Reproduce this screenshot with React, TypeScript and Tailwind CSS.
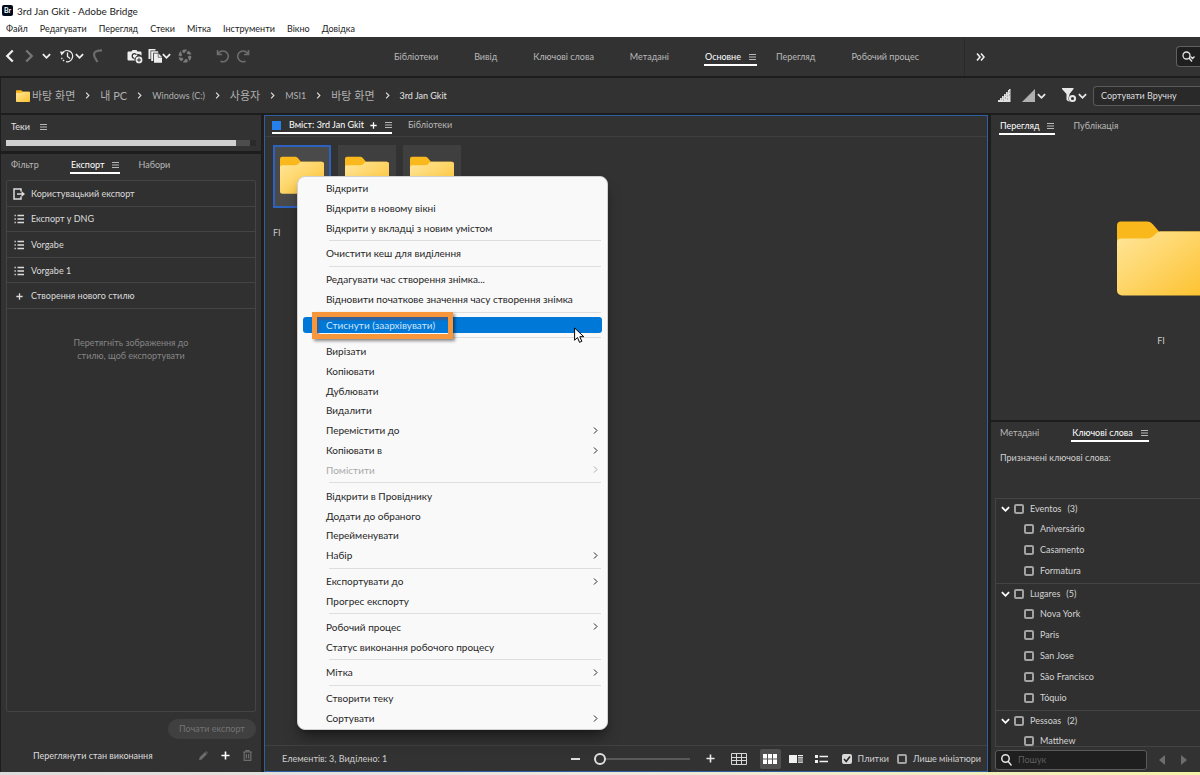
import type { ReactNode } from "react";
import { clsx } from "clsx";

interface MenuEntry {
  label: string;
  submenu?: boolean;
  disabled?: boolean;
  active?: boolean;
}

interface KeywordGroup {
  name: string;
  items: string[];
  count: number;
}

const appMenu = ["Файл", "Редагувати", "Перегляд", "Стеки", "Мітка", "Інструменти", "Вікно", "Довідка"];

const workspaces = ["Бібліотеки", "Вивід", "Ключові слова", "Метадані", "Основне", "Перегляд", "Робочий процес"];

const crumbs = ["바탕 화면", "내 PC", "Windows (C:)", "사용자", "MSI1", "바탕 화면", "3rd Jan Gkit"];

const presets = ["Експорт у DNG", "Vorgabe", "Vorgabe 1"];

const contextMenu: MenuEntry[][] = [
  [{ label: "Відкрити" }, { label: "Відкрити в новому вікні" }, { label: "Відкрити у вкладці з новим умістом" }],
  [{ label: "Очистити кеш для виділення" }],
  [{ label: "Редагувати час створення знімка..." }, { label: "Відновити початкове значення часу створення знімка" }],
  [{ label: "Стиснути (заархівувати)", active: true }],
  [
    { label: "Вирізати" },
    { label: "Копіювати" },
    { label: "Дублювати" },
    { label: "Видалити" },
    { label: "Перемістити до", submenu: true },
    { label: "Копіювати в", submenu: true },
    { label: "Помістити", submenu: true, disabled: true },
  ],
  [
    { label: "Відкрити в Провіднику" },
    { label: "Додати до обраного" },
    { label: "Перейменувати" },
    { label: "Набір", submenu: true },
  ],
  [{ label: "Експортувати до", submenu: true }, { label: "Прогрес експорту" }],
  [{ label: "Робочий процес", submenu: true }, { label: "Статус виконання робочого процесу" }],
  [{ label: "Мітка", submenu: true }],
  [{ label: "Створити теку" }, { label: "Сортувати", submenu: true }],
];

const keywords: KeywordGroup[] = [
  { name: "Eventos", count: 3, items: ["Aniversário", "Casamento", "Formatura"] },
  { name: "Lugares", count: 5, items: ["Nova York", "Paris", "San Jose", "São Francisco", "Tóquio"] },
  { name: "Pessoas", count: 2, items: ["Matthew"] },
];

const checkbox =
  "h-[10px] w-[10px] shrink-0 appearance-none rounded-[2px] border-2 border-[#a2a2a2] bg-transparent";

function Chevron({ dir, className }: { dir: "left" | "right" | "down"; className?: string }) {
  const d = { left: "M7 1 2 6l5 5", right: "M2 1l5 5-5 5", down: "M1 3.500l4 4 4-4" }[dir];
  return (
    <svg
      viewBox={dir === "down" ? "0 0 10 11" : "0 0 9 12"}
      className={clsx("shrink-0", className)}
      fill="none"
      stroke="currentColor"
      strokeWidth="2"
    >
      <path d={d} />
    </svg>
  );
}

function Burger() {
  return (
    <svg viewBox="0 0 7 6" className="h-[6px] w-[7px] shrink-0 text-[#b8b8b8]" stroke="currentColor">
      <path d="M0 .5h7M0 3h7M0 5.500h7" />
    </svg>
  );
}

function Folder({ id, className }: { id: string; className: string }) {
  return (
    <svg viewBox="0 0 88 75" className={className}>
      <defs>
        <linearGradient id={id} x1="0" y1="0" x2="1" y2="1">
          <stop offset="0" stopColor="#ffe69b" />
          <stop offset="1" stopColor="#fdc22f" />
        </linearGradient>
      </defs>
      <path d="M0 5a4 4 0 0 1 4-4h26c3 0 4 1 6 3l6 7h41a5 5 0 0 1 5 5v22H0z" fill="#f9b81c" />
      <path d="M0 22a4 4 0 0 1 4-4h26c4 0 6-2 8-4 2-2 3-3 6-3h39a5 5 0 0 1 5 5v54a5 5 0 0 1-5 5H5a5 5 0 0 1-5-5z" fill={`url(#${id})`} />
    </svg>
  );
}

function Tab({ children, active, menu = active }: { children: ReactNode; active?: boolean; menu?: boolean }) {
  return (
    <button
      type="button"
      className={clsx(
        "flex h-[18px] shrink-0 items-center gap-2 border-b-2 px-px pt-[2px]",
        active ? "border-white text-white" : "border-transparent text-[#b9b9b9]",
      )}
    >
      {children}
      {menu && <Burger />}
    </button>
  );
}

function Divider() {
  return <span className="h-5 w-px shrink-0 bg-[#484848]" />;
}

function TitleBar() {
  return (
    <header className="shrink-0 bg-white text-[#1c1c1c]">
      <div className="flex h-5 items-center gap-1 px-[2px]">
        <span className="flex h-[11px] w-[11px] items-center justify-center rounded-[2px] bg-[#000b1d] text-[7px] font-bold text-white">
          Br
        </span>
        <h1 className="pt-px text-[10px]">3rd Jan Gkit - Adobe Bridge</h1>
      </div>
      <nav className="flex h-[17px] items-center gap-3 px-[6px]">
        {appMenu.map((label) => (
          <button key={label} type="button">
            {label}
          </button>
        ))}
      </nav>
    </header>
  );
}

function Toolbar() {
  return (
    <div className="flex h-[39px] shrink-0 items-center bg-[#323232]">
      <div className="flex w-[393px] shrink-0 items-center pb-[2px] pl-[5px] text-[#efefef]">
        <button type="button" aria-label="Назад">
          <Chevron dir="left" className="h-[14px] w-[10px]" />
        </button>
        <button type="button" aria-label="Вперед" className="ml-[9px] text-[#777]">
          <Chevron dir="right" className="h-[14px] w-[10px]" />
        </button>
        <button type="button" aria-label="Останні теки" className="ml-2">
          <Chevron dir="down" className="h-[10px] w-[9px]" />
        </button>
        <button type="button" aria-label="Журнал" className="ml-[9px] flex items-center gap-px">
          <svg viewBox="0 0 14 14" className="h-[14px] w-[14px]" fill="none" stroke="currentColor" strokeWidth="1.300">
            <path d="M2.300 4.200A5.600 5.600 0 1 1 6 12.700" />
            <path d="M4.200 12A5.600 5.600 0 0 1 1.500 8.500" strokeDasharray="1.500 1.200" />
            <path d="M7.500 3.500V7.500l2.600 2" />
            <path d="M0 2.600 4.600 3 1.500 6.600z" fill="currentColor" stroke="none" />
          </svg>
          <Chevron dir="down" className="h-[10px] w-[9px]" />
        </button>
        <button type="button" aria-label="Повернутися" className="ml-2 text-[#6d6d6d]">
          <svg viewBox="0 0 11 14" className="h-[14px] w-[11px]" fill="none" stroke="currentColor" strokeWidth="2.200">
            <path d="M10 1.300C4.500 1.300 2 3 2 5.500 2 8.500 4 10 5.500 13" />
          </svg>
        </button>
        <span className="mr-3 ml-3">
          <Divider />
        </span>
        <button type="button" aria-label="Імпорт із камери">
          <svg viewBox="0 0 16 15" className="mt-px h-[15px] w-4" fill="currentColor">
            <path
              fillRule="evenodd"
              d="M1.500 2.500h3L5.500 1h4l1 1.500h3A1 1 0 0 1 14.500 3.500v3.300A4 4 0 0 0 8 11.500H1.500a1 1 0 0 1-1-1v-7a1 1 0 0 1 1-1zM7.500 4a2.900 2.900 0 1 0 0 5.800A4 4 0 0 1 10.400 6.500 2.900 2.900 0 0 0 7.500 4z"
            />
            <circle cx="7.500" cy="6.900" r="1.700" />
            <path fillRule="evenodd" d="M12 7.500a3.400 3.400 0 1 1 0 6.800 3.400 3.400 0 0 1 0-6.800zm-.500 1.300v1.600H9.900v1h1.600V13h1v-1.600h1.600v-1h-1.600V8.800z" />
          </svg>
        </button>
        <button type="button" aria-label="Уточнити" className="ml-[5px] flex items-center">
          <svg viewBox="0 0 14 14" className="h-[14px] w-[14px]">
            <path d="M.5 0h7v1.500H2.500V10H.5z" fill="currentColor" />
            <path d="M3.200 2.200h7v1.500H5.200V12h-2z" fill="currentColor" />
            <path d="M6 4.500h4.500L14 8v5.700H6z" fill="currentColor" />
            <path d="M10.200 4.500V8.300h3.800" fill="none" stroke="#323232" strokeWidth=".6" />
          </svg>
          <Chevron dir="down" className="h-[10px] w-[9px]" />
        </button>
        <button type="button" aria-label="Відкрити в Camera Raw" className="ml-[7px] text-[#7a7a7a]">
          <svg viewBox="0 0 14 14" className="h-[14px] w-[14px]" fill="currentColor">
            {[0, 60, 120, 180, 240, 300].map((deg) => (
              <path key={deg} d="M4.200 1.100Q6.500 0 9.200 .8L6.200 4.200 4.600 3.600z" transform={`rotate(${deg} 7 7)`} />
            ))}
          </svg>
        </button>
        <span className="mr-3 ml-3">
          <Divider />
        </span>
        <div className="flex gap-[6px] text-[#6d6d6d]">
          <button type="button" aria-label="Повернути проти годинникової стрілки">
            <svg viewBox="0 0 14 14" className="h-[14px] w-[14px]" fill="none" stroke="currentColor" strokeWidth="1.600">
              <path d="M1.500 1v4.500H6M2 5A5.400 5.400 0 1 1 4.500 12.200" />
            </svg>
          </button>
          <button type="button" aria-label="Повернути за годинниковою стрілкою">
            <svg viewBox="0 0 14 14" className="h-[14px] w-[14px]" fill="none" stroke="currentColor" strokeWidth="1.600">
              <path d="M12.500 1v4.500H8M12 5A5.400 5.400 0 1 0 9.500 12.200" />
            </svg>
          </button>
        </div>
      </div>
      <nav className="flex h-full items-center gap-[34px] border-r border-[#2a2a2a] pr-[44px]">
        {workspaces.map((name) => (
          <div key={name} className={clsx("shrink-0", name === "Основне" && "-mr-4")}>
            <Tab active={name === "Основне"}>{name}</Tab>
          </div>
        ))}
      </nav>
      <button type="button" aria-label="Більше" className="ml-[11px] text-[#efefef]">
        <svg viewBox="0 0 9 8" className="h-2 w-[9px]" fill="none" stroke="currentColor" strokeWidth="1.600">
          <path d="M1 .5 4 4 1 7.500M5 .5 8 4 5 7.500" />
        </svg>
      </button>
      <button
        type="button"
        aria-label="Пошук"
        className="ml-auto flex h-[21px] w-6 items-center rounded-l-[4px] border border-r-0 border-[#606060] bg-[#1f1f1f] pl-[5px] text-[#e4e4e4]"
      >
        <svg viewBox="0 0 14 12" className="h-3 w-[14px] shrink-0" fill="none" stroke="currentColor" strokeWidth="1.300">
          <circle cx="4.500" cy="4.500" r="3.500" />
          <path d="M7 7l3 3.500M8.500 5.500l2 2 2-2" />
        </svg>
      </button>
    </div>
  );
}

function PathBar() {
  return (
    <div className="mt-[2px] ml-px flex h-[35px] shrink-0 items-center bg-[#323232]">
      <Folder id="crumb" className="ml-[15px] h-3 w-[14px]" />
      <nav className="ml-[2px] flex items-center gap-[10px] text-[#b0b0b0]">
        {crumbs.map((name, i) => (
          <div key={i} className="flex shrink-0 items-center gap-[10px]">
            {i > 0 && <Chevron dir="right" className="h-[9px] w-[5px] text-[#e0e0e0]" />}
            <a
              href="#"
              className={clsx(/[가-힣]/.test(name) && "text-[11px]", i === crumbs.length - 1 && "text-[#e4e4e4]")}
            >
              {name}
            </a>
          </div>
        ))}
      </nav>
      <div className="ml-auto flex shrink-0 items-center text-[#e8e8e8]">
        <button type="button" aria-label="Мініатюри">
          <svg viewBox="0 0 13 13" className="h-[13px] w-[13px]">
            <path d="M12.500 0v13H0v-2h2V9h2V7h2V5h2V3h2V1h1V0z" fill="#e0e0e0" />
            <path d="M3 10h1M5 8h1M5 11h1M7 6h1M7 9h1M9 4h1M9 7h1M9 10h1M11 3h1M11 6h1" stroke="#8c8c8c" />
          </svg>
        </button>
        <button type="button" aria-label="Якість мініатюр" className="ml-[11px] flex items-center gap-[2px]">
          <svg viewBox="0 0 13 13" className="h-[13px] w-[13px]">
            <path d="M13 0v13H0z" fill="#b0b0b0" />
          </svg>
          <Chevron dir="down" className="h-[10px] w-[9px]" />
        </button>
        <span className="ml-2">
          <Divider />
        </span>
        <button type="button" aria-label="Фільтр" className="ml-2 flex items-center gap-px">
          <svg viewBox="0 0 15 15" className="h-[15px] w-[15px]">
            <path d="M0 0h11.500v1L7.500 6v8L4.500 12V6L0 1z" fill="currentColor" />
            <circle cx="10.500" cy="10.500" r="4" fill="#323232" />
            <circle cx="10.500" cy="10.500" r="2.600" fill="none" stroke="currentColor" strokeWidth="2" />
          </svg>
          <Chevron dir="down" className="h-[10px] w-[9px]" />
        </button>
        <select
          aria-label="Сортувати"
          className="ml-[6px] h-5 w-[107px] appearance-none rounded-l-[4px] border border-r-0 border-[#5a5a5a] bg-[#292929] pl-[7px] text-[#dcdcdc]"
        >
          <option>Сортувати Вручну</option>
        </select>
      </div>
    </div>
  );
}

function ListIcon() {
  return (
    <svg viewBox="0 0 10 10" className="h-[10px] w-[10px]" stroke="currentColor" strokeWidth="1.400">
      <path d="M3.500 1.500H10M3.500 5H10M3.500 8.500H10M.5 1.500h1.300M.5 5h1.300M.5 8.500h1.300" />
    </svg>
  );
}

function PlusIcon({ className }: { className: string }) {
  return (
    <svg viewBox="0 0 10 10" className={className} stroke="currentColor" strokeWidth="1.800">
      <path d="M5 .5v9M.5 5h9" />
    </svg>
  );
}

function PresetRow({ icon, children }: { icon: ReactNode; children: ReactNode }) {
  return (
    <li className="flex flex-1 border-b border-[#444]">
      <button type="button" className="flex flex-1 items-center pt-px text-left">
        <span className="flex w-6 justify-center">{icon}</span>
        {children}
      </button>
    </li>
  );
}

function LeftColumn() {
  return (
    <aside className="flex w-[260px] shrink-0 flex-col gap-[3px]">
      <section className="h-9 bg-[#323232] px-[5px] pt-[3px]">
        <h2 className="flex h-[18px] items-center gap-[10px] pl-[5px] text-[#e0e0e0]">
          Теки
          <Burger />
        </h2>
        <div className="mt-1 flex h-[6px] bg-[#2a2a2a]">
          <div className="w-[92%] bg-[#d0d0d0]" />
          <div className="w-[14px] bg-[#4d4d4d]" />
        </div>
      </section>

      <section className="flex flex-1 flex-col bg-[#323232] px-[5px]">
        <div className="flex h-[26px] gap-[17px] pt-[2px] pl-1">
          <div className="flex w-[43px]">
            <Tab>Фільтр</Tab>
          </div>
          <Tab active>Експорт</Tab>
          <Tab>Набори</Tab>
        </div>
        <div className="flex-1 rounded-[2px] border border-[#444] bg-[#303030]">
          <ul className="flex h-32 flex-col text-[#dcdcdc]">
            <PresetRow
              icon={
                <svg viewBox="0 0 12 12" className="h-3 w-3" fill="none" stroke="currentColor" strokeWidth="1.500">
                  <path d="M8 3.500V1H1v10h7V8.500M4 6h6" />
                  <path d="M8.500 3 12 6 8.500 9z" fill="currentColor" stroke="none" />
                </svg>
              }
            >
              Користувацький експорт
            </PresetRow>
            {presets.map((name) => (
              <PresetRow key={name} icon={<ListIcon />}>
                {name}
              </PresetRow>
            ))}
            <PresetRow icon={<PlusIcon className="h-[7px] w-[7px]" />}>Створення нового стилю</PresetRow>
          </ul>
          <p className="mt-[27px] text-center leading-[13px] text-[#868686]">
            Перетягніть зображення до
            <br />
            стилю, щоб експортувати
          </p>
        </div>
        <button type="button" disabled className="mt-[7px] h-5 w-[88px] self-end rounded-full bg-[#404040] text-[#737373]">
          Почати експорт
        </button>
        <div className="flex h-[33px] items-center pl-[27px] text-[#dcdcdc]">
          <a href="#">Переглянути стан виконання</a>
          <div className="ml-auto flex items-center gap-[13px] pr-1">
            <button type="button" aria-label="Редагувати" className="text-[#6d6d6d]">
              <svg viewBox="0 0 10 10" className="h-[10px] w-[10px]" fill="currentColor">
                <path d="M1 9.300 1.700 6.300 7 1l2 2-5.300 5.500zM7.600.6l.6-.5 1.800 1.800-.6.600z" />
              </svg>
            </button>
            <button type="button" aria-label="Додати" className="text-white">
              <PlusIcon className="h-[9px] w-[9px]" />
            </button>
            <button type="button" aria-label="Видалити" className="text-[#6d6d6d]">
              <svg viewBox="0 0 9 11" className="h-[11px] w-[9px]" fill="none" stroke="currentColor" strokeWidth="1.200">
                <path d="M0 2h9M3 1.800V.6h3v1.200M1.200 2v8.300h6.600V2M3.400 4v4.600M5.600 4v4.600" />
              </svg>
            </button>
          </div>
        </div>
      </section>
    </aside>
  );
}

function ContextMenu() {
  return (
    <div className="absolute top-[60px] left-8 w-[311px] rounded-lg border border-[#d0d0d0] bg-[#f9f9f9] py-px text-[10px] text-[#262626] shadow-lg shadow-black/40">
      <ul role="menu" className="flex h-[550px] flex-col">
        {contextMenu.map((group, g) => (
          <li key={g} role="none" className="contents">
            {g > 0 && (
              <span className="mr-[6px] ml-[31px] flex h-[6px] shrink-0 items-center">
                <span className="h-px flex-1 bg-[#dedede]" />
              </span>
            )}
            {group.map((item) => (
              <button
                key={item.label}
                type="button"
                role="menuitem"
                disabled={item.disabled}
                className={clsx(
                  "relative mr-[5px] ml-[5px] flex min-h-0 flex-1 items-center pr-1 pl-[23px] text-left",
                  item.active && "text-[#cfe4f8]",
                  item.disabled && "text-[#aaa]",
                )}
              >
                {item.active && (
                  <>
                    <span className="absolute inset-x-0 top-[2px] bottom-[2px] rounded-[3px] bg-[#0078d7]" />
                    <span className="absolute -top-[3px] -bottom-[4px] left-[9px] w-[141px] border-[5px] border-[#f7963a] shadow-[2px_2px_3px_rgba(0,0,0,0.45),inset_2px_3px_2px_rgba(90,80,110,0.6)]" />
                  </>
                )}
                <span className="relative flex-1">{item.label}</span>
                {item.submenu && (
                  <svg viewBox="0 0 5 7" className="h-[7px] w-[5px]" fill="none" stroke="currentColor">
                    <path d="M1 .5l3 3-3 3" />
                  </svg>
                )}
              </button>
            ))}
          </li>
        ))}
      </ul>
      <svg viewBox="0 0 11 17" className="absolute top-[150px] left-[276px] h-[17px] w-[11px]">
        <path d="M.6 1v12.200l2.900-2.700 2 4.800 2.300-1-2-4.600h4z" fill="#fff" stroke="#000" />
      </svg>
    </div>
  );
}

function ContentPanel() {
  return (
    <main className="relative flex min-w-0 flex-1 flex-col border border-[#2f5f9e] bg-[#323232]">
      <div className="flex h-[21px] shrink-0 items-start gap-[15px] border-b border-[#3e3e3e] pl-[7px]">
        <div className="flex h-[18px] items-center border-b-2 border-white pt-[2px] text-white">
          <span className="h-[9px] w-[9px] bg-[#2680eb]" />
          <button type="button" className="ml-2">
            Вміст: 3rd Jan Gkit
          </button>
          <button type="button" aria-label="Нова вкладка" className="ml-[6px]">
            <PlusIcon className="h-[7px] w-[7px]" />
          </button>
          <button type="button" aria-label="Меню панелі" className="ml-2">
            <Burger />
          </button>
        </div>
        <Tab>Бібліотеки</Tab>
      </div>

      <div className="flex-1 pt-2 pl-2">
        <div className="flex gap-[7px]">
          {["a", "b", "c"].map((id, i) => (
            <button
              key={id}
              type="button"
              aria-label="FI"
              className={clsx(
                "flex h-[63px] w-[58px] items-start justify-center border-2 pt-[9px]",
                i === 0 ? "border-[#2d62c0] bg-[#4a4a4a]" : "border-transparent bg-[#3f3f3f]",
              )}
            >
              <Folder id={`thumb-${id}`} className="h-[38px] w-[44px]" />
            </button>
          ))}
        </div>
        <p className="mt-[19px] text-[#c8c8c8]">FI</p>
      </div>

      <footer className="flex h-[26px] shrink-0 items-center border-t border-[#414141] pl-[17px] text-[#cfcfcf]">
        <span>Елементів: 3, Виділено: 1</span>
        <div className="ml-auto flex shrink-0 items-center">
          <button type="button" aria-label="Зменшити" className="h-[2px] w-[9px] bg-[#dedede]" />
          <input
            type="range"
            min={0}
            max={100}
            defaultValue={0}
            aria-label="Розмір мініатюр"
            className="ml-[14px] h-3 w-24 appearance-none bg-transparent [&::-webkit-slider-runnable-track]:h-[2px] [&::-webkit-slider-runnable-track]:bg-[#595959] [&::-webkit-slider-thumb]:-mt-[5px] [&::-webkit-slider-thumb]:h-3 [&::-webkit-slider-thumb]:w-3 [&::-webkit-slider-thumb]:appearance-none [&::-webkit-slider-thumb]:rounded-full [&::-webkit-slider-thumb]:border-2 [&::-webkit-slider-thumb]:border-[#dedede] [&::-webkit-slider-thumb]:bg-[#323232]"
          />
          <button type="button" aria-label="Збільшити" className="ml-4 text-[#e8e8e8]">
            <PlusIcon className="h-[9px] w-[9px]" />
          </button>
          <span className="ml-[9px]">
            <Divider />
          </span>
          <button type="button" aria-label="Закріпити сітку" className="ml-[7px]">
            <svg viewBox="0 0 16 12" className="h-3 w-4" fill="none" stroke="#d8d8d8">
              <path d="M.5.5h15v11H.5zM5.500.5v11M10.500.5v11M.5 4.500h15M.5 7.500h15" />
            </svg>
          </button>
          <span className="ml-[7px]">
            <Divider />
          </span>
          <button
            type="button"
            aria-label="Мініатюри"
            className="ml-[6px] flex h-5 w-[21px] items-center justify-center rounded-[2px] bg-[#505050]"
          >
            <svg viewBox="0 0 14 10" className="h-[10px] w-[14px]" fill="#fff">
              <path d="M0 0h4v4.500H0zM5 0h4v4.500H5zM10 0h4v4.500h-4zM0 5.500h4V10H0zM5 5.500h4V10H5zM10 5.500h4V10h-4z" />
            </svg>
          </button>
          <button type="button" aria-label="Відомості" className="ml-2">
            <svg viewBox="0 0 14 8" className="h-2 w-[14px]" fill="#f0f0f0">
              <path d="M0 0h8v8H0zM9 0h5v1.200H9zM9 2.200h5v1.200H9zM9 4.400h5v1.200H9zM9 6.600h5v1.200H9z" />
            </svg>
          </button>
          <button type="button" aria-label="Список" className="ml-3">
            <svg viewBox="0 0 13 8" className="h-2 w-[13px]" fill="#f0f0f0">
              <path d="M0 0h3v3H0zM4.500.7H13v1.500H4.500zM0 5h3v3H0zM4.500 5.700H13v1.500H4.500z" />
            </svg>
          </button>
          <span className="ml-[9px]">
            <Divider />
          </span>
          <label className="ml-[5px] flex items-center gap-[6px]">
            <span className="relative flex">
              <input
                type="checkbox"
                defaultChecked
                className="h-[10px] w-[10px] appearance-none rounded-[2px] border-2 border-[#d8d8d8] checked:bg-[#d8d8d8] peer"
              />
              <svg
                viewBox="0 0 10 10"
                className="pointer-events-none absolute inset-0 hidden h-[10px] w-[10px] peer-checked:block"
                fill="none"
                stroke="#2a2a2a"
                strokeWidth="1.600"
              >
                <path d="M2 5l2.200 2.500L8 2.500" />
              </svg>
            </span>
            Плитки
          </label>
          <label className="mr-[6px] ml-2 flex items-center gap-[6px]">
            <input type="checkbox" className={checkbox} />
            Лише мініатюри
          </label>
        </div>
      </footer>
      <ContextMenu />
    </main>
  );
}

function RightColumn() {
  return (
    <aside className="flex w-[209px] shrink-0 flex-col gap-[2px] overflow-hidden">
      <section className="h-[305px] shrink-0 overflow-hidden bg-[#323232]">
        <div className="flex h-[21px] gap-[17px] pt-[2px] pl-2">
          <Tab active>Перегляд</Tab>
          <Tab>Публікація</Tab>
        </div>
        {/* the pane is wider than what the window shows of it */}
        <figure className="mt-[84px] flex w-[340px] flex-col items-center">
          <Folder id="preview" className="h-[76px] w-[88px]" />
          <figcaption className="mt-[39px] text-[#c8c8c8]">FI</figcaption>
        </figure>
      </section>

      <section className="flex min-h-0 flex-1 flex-col bg-[#323232] pl-1">
        <div className="flex h-[22px] shrink-0 gap-[31px] pt-[2px] pl-1">
          <Tab>Метадані</Tab>
          <Tab active>Ключові слова</Tab>
        </div>
        <h3 className="mt-[7px] shrink-0 pl-[5px] leading-[14px] text-[#d0d0d0]">Призначені ключові слова:</h3>
        <div className="mt-[33px] min-h-0 flex-1 overflow-hidden border-b border-l border-[#444] bg-[#303030] text-[#d4d4d4]">
          {keywords.map((group) => (
            <div key={group.name} className="border-t border-[#444] pb-[2px]">
              <div className="flex h-[19px] items-center pl-[5px]">
                <Chevron dir="down" className="h-[10px] w-[9px] text-white" />
                <label className="ml-1 flex items-center gap-[6px]">
                  <input type="checkbox" className={checkbox} />
                  {group.name}
                  <span>({group.count})</span>
                </label>
              </div>
              {group.items.map((item) => (
                <label key={item} className="flex h-[21px] items-center gap-[6px] pl-7">
                  <input type="checkbox" className={checkbox} />
                  {item}
                </label>
              ))}
            </div>
          ))}
        </div>
        <div className="flex h-[25px] shrink-0 items-center">
          <label className="flex h-5 w-[152px] items-center gap-[6px] rounded-[3px] border border-[#5a5a5a] bg-[#1f1f1f] pl-[5px]">
            <svg viewBox="0 0 11 12" className="h-3 w-[11px] shrink-0" fill="none" stroke="#e4e4e4" strokeWidth="1.500">
              <circle cx="4.500" cy="4.500" r="3.700" />
              <path d="M7 7.200 10.500 11.500" />
            </svg>
            <input
              type="search"
              aria-label="Пошук"
              placeholder="Пошук"
              className="w-full min-w-0 bg-transparent text-[#d0d0d0] outline-none placeholder:text-[#5e5e5e]"
            />
          </label>
          <button type="button" aria-label="Попередній" className="ml-3">
            <svg viewBox="0 0 6 10" className="h-[10px] w-[6px]" fill="#6d6d6d">
              <path d="M6 0v10L0 5z" />
            </svg>
          </button>
          <button type="button" aria-label="Наступний" className="ml-4">
            <svg viewBox="0 0 6 10" className="h-[10px] w-[6px]" fill="#6d6d6d">
              <path d="M0 0v10l6-5z" />
            </svg>
          </button>
        </div>
      </section>
    </aside>
  );
}

export default function App() {
  return (
    <div className="flex h-screen flex-col overflow-hidden bg-[#1d1d1d] font-['Lato','Noto_Sans_CJK_KR',sans-serif] text-[9px] leading-[12px]">
      <TitleBar />
      <Toolbar />
      <PathBar />
      <div className="mt-[2px] flex min-h-0 flex-1 gap-[3px] pl-px">
        <LeftColumn />
        <ContentPanel />
        <RightColumn />
      </div>
      <div className="h-[3px] shrink-0 bg-linear-to-r from-[#dcdcdc] via-[#efe6dc] to-[#f3f3a8]" />
    </div>
  );
}
